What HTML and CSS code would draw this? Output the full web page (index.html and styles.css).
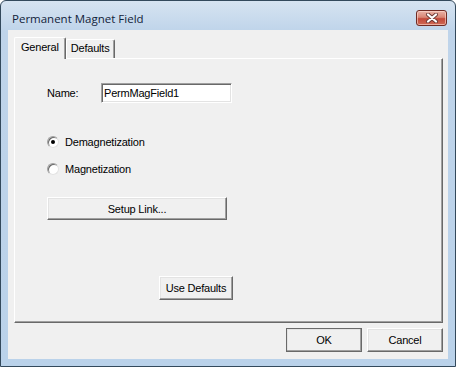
FILE: index.html
```html
<!DOCTYPE html>
<html lang="en">
<head>
  <meta charset="UTF-8" />
  <title>Permanent Magnet Field</title>
  <link rel="stylesheet" href="styles.css">
</head>
<body>
  <div class="window">
    <div class="titlebar">
      <span class="title">Permanent Magnet Field</span>
      <button class="close-button" aria-label="Close">
        <svg width="14" height="10" viewBox="0 0 14 10">
          <path d="M3 1.5 L11 8.5 M11 1.5 L3 8.5" stroke="#6b3a36" stroke-width="4" stroke-linecap="round"/>
          <path d="M3 1.5 L11 8.5 M11 1.5 L3 8.5" stroke="#fff" stroke-width="2.2" stroke-linecap="round"/>
        </svg>
      </button>
    </div>
    <div class="client">
      <div class="tabs">
        <div class="tab active">General</div>
        <div class="tab">Defaults</div>
      </div>
      <div class="page">
        <div class="name-row">
          <span class="label">Name:</span>
          <div class="textbox">PermMagField1</div>
        </div>
        <div class="radios">
          <div class="radio-row"><span class="radio checked"></span>Demagnetization</div>
          <div class="radio-row"><span class="radio"></span>Magnetization</div>
        </div>
        <button class="btn setup-button">Setup Link...</button>
        <button class="btn defaults-button">Use Defaults</button>
      </div>
      <div class="footer">
        <button class="btn ok-button">OK</button>
        <button class="btn cancel-button">Cancel</button>
      </div>
    </div>
  </div>
</body>
</html>
```

FILE: styles.css
```css
* {
  margin: 0;
  padding: 0;
  box-sizing: border-box;
}
html, body {
  width: 100%;
  height: 100vh;
  overflow: hidden;
  background: #fff;
}
body {
  font-family: 'Liberation Sans', Arial, sans-serif;
  font-size: 11px;
  letter-spacing: -0.2px;
  color: #000;
}
.window {
  width: 456px;
  height: 367px;
  border: 1px solid #33495c;
  border-radius: 6px 6px 0 0;
  background: linear-gradient(#d6e3f1, #bfd4ea 30px, #bad2ea);
  padding: 0 7px 7px 7px;
  display: flex;
  flex-direction: column;
}
.titlebar {
  height: 29px;
  padding-top: 5px;
  display: flex;
  align-items: center;
  justify-content: space-between;
}
.title {
  font-family: 'Open Sans', 'Noto Sans', sans-serif;
  font-size: 11.5px;
  letter-spacing: 0;
  color: #12233a;
  padding-left: 4px;
}
.close-button {
  width: 31px;
  height: 16px;
  margin-right: 1px;
  border: 1px solid #6f2b24;
  border-radius: 3px;
  background: linear-gradient(#eab3a8, #d98675 45%, #c2493a 55%, #cf6a55);
  box-shadow: inset 0 0 0 1px rgba(255, 220, 210, 0.6);
  display: flex;
  align-items: center;
  justify-content: center;
}
.client {
  flex: 1;
  background: #f0f0f0;
  padding: 7px 5px 7px 6px;
  display: flex;
  flex-direction: column;
}
.tabs {
  height: 21px;
  display: flex;
  align-items: flex-end;
  position: relative;
  z-index: 1;
}
.tab {
  height: 19px;
  padding: 0 4px 0 4px;
  border-top: 1px solid #fff;
  border-left: 1px solid #fff;
  border-right: 1px solid #696969;
  box-shadow: inset -1px 0 0 #a0a0a0;
  border-radius: 2px 2px 0 0;
  line-height: 17px;
  background: #f0f0f0;
}
.tab.active {
  height: 22px;
  margin-bottom: -1px;
  padding: 0 6px 0 6px;
  line-height: 19px;
}
.page {
  height: 265px;
  border-top: 1px solid #fff;
  border-left: 1px solid #fff;
  border-right: 1px solid #696969;
  border-bottom: 1px solid #696969;
  box-shadow: inset -1px -1px 0 #a0a0a0;
  padding: 24px 0 0 32px;
  display: flex;
  flex-direction: column;
  align-items: flex-start;
}
.name-row {
  display: flex;
  align-items: center;
}
.label {
  width: 54px;
}
.textbox {
  width: 131px;
  height: 20px;
  background: #fff;
  border-top: 1px solid #a0a0a0;
  border-left: 1px solid #a0a0a0;
  border-right: 1px solid #fff;
  border-bottom: 1px solid #fff;
  box-shadow: inset 1px 1px 0 #696969, inset -1px -1px 0 #e3e3e3;
  padding: 0 2px;
  line-height: 18px;
}
.radios {
  margin-top: 30px;
  display: flex;
  flex-direction: column;
  gap: 10px;
}
.radio-row {
  height: 17px;
  display: flex;
  align-items: center;
}
.radio {
  width: 12px;
  height: 12px;
  margin-right: 6px;
  border-radius: 50%;
  background: #fff;
  border: 1px solid;
  border-color: #a0a0a0 #e3e3e3 #e3e3e3 #a0a0a0;
  box-shadow: inset 1px 1px 0 #696969;
  display: flex;
  align-items: center;
  justify-content: center;
}
.radio.checked::after {
  content: "";
  width: 4px;
  height: 4px;
  border-radius: 50%;
  background: #000;
}
.btn {
  font-family: inherit;
  font-size: 11px;
  letter-spacing: -0.2px;
  color: #000;
  background: #f0f0f0;
  border: 1px solid;
  border-color: #fff #696969 #696969 #fff;
  box-shadow: inset -1px -1px 0 #a0a0a0, inset 1px 1px 0 #e3e3e3;
  height: 24px;
}
.setup-button {
  margin-top: 20px;
  width: 180px;
  height: 23px;
}
.defaults-button {
  margin-top: 56px;
  margin-left: 112px;
  width: 74px;
}
.footer {
  margin-top: 5px;
  display: flex;
  justify-content: flex-end;
  gap: 5px;
}
.ok-button, .cancel-button {
  width: 76px;
}
.ok-button {
  border-color: #696969;
}
```
